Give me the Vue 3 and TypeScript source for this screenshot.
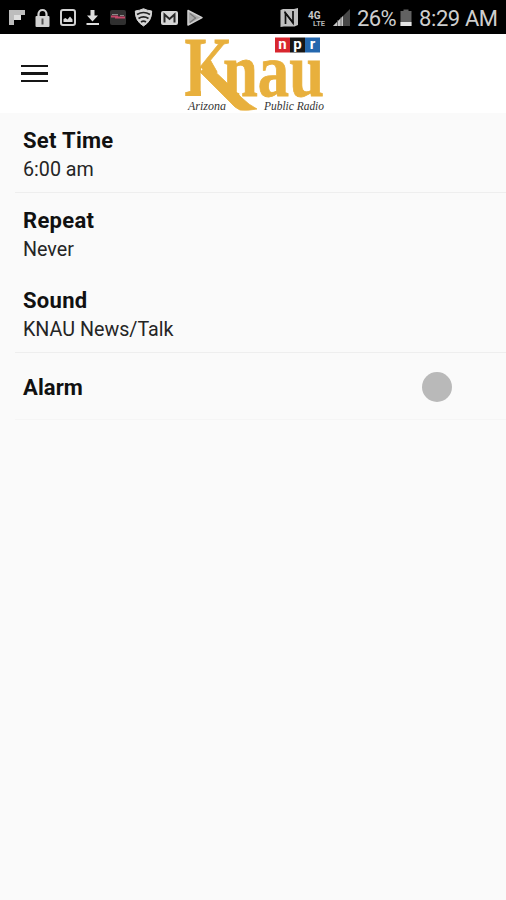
<script setup lang="ts">
import { ref } from 'vue'

interface Setting {
  label: string
  value: string
  divider: boolean
}

const settings: Setting[] = [
  { label: 'Set Time', value: '6:00 am', divider: true },
  { label: 'Repeat', value: 'Never', divider: false },
  { label: 'Sound', value: 'KNAU News/Talk', divider: true },
]

const alarmOn = ref(false)
</script>

<template>
  <div class="screen">
    <div class="status">
      <svg class="icons" width="210" height="34" viewBox="0 0 210 34">
        <path d="M9 10h16v5H14v10H9z" fill="#bdbdbd" />
        <path d="M14 15h7v5h-7z" fill="#dedede" />
        <path d="M38.500 17v-3a4 4 0 0 1 8 0v3" fill="none" stroke="#d2d2d2" stroke-width="2.200" />
        <rect x="35.500" y="16" width="14" height="11" rx="1" fill="#d2d2d2" />
        <path d="M42.500 18.500v6" stroke="#555" stroke-width="2" />
        <rect x="61" y="10" width="14" height="15" rx="2" fill="none" stroke="#d2d2d2" stroke-width="2" />
        <path d="M63.500 22v-3l2-1 2 1.500 2.500-3 2.500 3V22z" fill="#d8d8d8" />
        <path d="M90.500 10h4v5.500h3.500l-5.500 6-5.500-6h3.500zM86.500 23h12.500v2H86.500z" fill="#dedede" />
        <rect x="110" y="10" width="16" height="15" rx="2" fill="#303030" />
        <path d="M111 16.500h7M115 17.500h10" stroke="#c44769" stroke-width="2" />
        <path d="M112 14.500h6M120 15.500h4" stroke="#888" stroke-width="1" />
        <path d="M135.300 11q4.500-.5 8.200-2.300Q147 10.500 151.700 11q.3 10-8.200 15-8.500-5-8.200-15z" fill="#d6d6d6" stroke="#d6d6d6" stroke-linejoin="round" />
        <path d="M137 14.500q6.500-4 13 0M138.500 18.500q5-3.300 10 0M141 22q2.500-1.600 5 0" fill="none" stroke="#222" stroke-width="1.700" />
        <rect x="161" y="11" width="17" height="14" rx="2" fill="#d6d6d6" />
        <path d="M164.500 22.500v-8l5 4.500 5-4.500v8" fill="none" stroke="#292929" stroke-width="2" />
        <path d="M188 10.500v14.500l14-7.300z" fill="#a9a9a9" stroke="#d0d0d0" stroke-width="1.500" stroke-linejoin="round" />
        <path d="M190 13.500l6 5M190 22.500l6-5" stroke="#777" stroke-width="1.200" />
      </svg>
      <div class="right">
        <svg width="76" height="34" viewBox="278 0 76 34">
          <path d="M283 9h11l4-1v17l-3.500 1.500h-10.500l-3.500.5V10z" fill="#c0c0c0" />
          <path d="M285.500 24V13l7.500 10V11" fill="none" stroke="#111" stroke-width="1.700" />
          <path d="M284.500 12l9 11" stroke="#111" stroke-width="1.500" />
          <text x="308" y="19" font-size="10" font-weight="700" fill="#c9c9c9">4G</text>
          <text x="313" y="26" font-size="8" font-weight="700" fill="#b5b5b5" textLength="12" lengthAdjust="spacingAndGlyphs">LTE</text>
          <path d="M333 26l17-17v17z" fill="#484848" />
          <path d="M333 26l10-10v10z" fill="#c8c8c8" />
          <path d="M337.500 20v6M341 17v9" stroke="#555" stroke-width=".8" />
        </svg>
        <span class="percent">26%</span>
        <svg class="battery" width="12" height="34" viewBox="400 0 12 34">
          <path d="M400.500 11h3V9.500h5V11h3v15h-11z" fill="#626262" />
          <path d="M400.500 22h11v4h-11z" fill="#e6e6e6" />
        </svg>
        <span class="clock">8:29 AM</span>
      </div>
    </div>

    <header class="header">
      <button class="menu" aria-label="Menu"><i></i><i></i><i></i></button>
      <svg class="logo" width="150" height="79" viewBox="180 34 150 79">
        <defs>
          <clipPath id="k-upper">
            <path d="M180 34h56v26l-24 16-11-8v32h-21z" />
          </clipPath>
        </defs>
        <g class="wordmark">
          <text x="184.500" y="96" font-size="85" textLength="48" lengthAdjust="spacingAndGlyphs" clip-path="url(#k-upper)">K</text>
          <path d="M200 72l8-7 17 16q12 12 17 17 7 7 15 11-10 2-17 1-5-2-10-8z" />
          <text x="223" y="96" font-size="77" textLength="101" lengthAdjust="spacingAndGlyphs">nau</text>
        </g>
        <path d="M275 37.500h15v15h-15z" fill="#d8262e" />
        <path d="M290 37.500h15v15h-15z" fill="#161616" />
        <path d="M305 37.500h15v15h-15z" fill="#2467ae" />
        <g class="npr">
          <text x="282.500" y="49">n</text>
          <text x="297.500" y="49">p</text>
          <text x="312.500" y="49">r</text>
        </g>
        <g class="tagline">
          <text x="188" y="109.500" textLength="38" lengthAdjust="spacingAndGlyphs">Arizona</text>
          <text x="264" y="109.500" textLength="60" lengthAdjust="spacingAndGlyphs">Public Radio</text>
        </g>
      </svg>
    </header>

    <main>
      <section v-for="item in settings" :key="item.label" class="row" :class="{ divided: item.divider }">
        <h2>{{ item.label }}</h2>
        <p>{{ item.value }}</p>
      </section>
      <section class="row alarm">
        <h2>Alarm</h2>
        <button class="toggle" role="switch" :aria-checked="alarmOn" aria-label="Alarm" @click="alarmOn = !alarmOn">
          <span class="knob" :class="{ on: alarmOn }"></span>
        </button>
      </section>
    </main>
  </div>
</template>

<style>
body {
  margin: 0;
  background: #fafafa;
}
</style>

<style scoped>
.screen {
  width: 506px;
  height: 900px;
  overflow: hidden;
  background: #fafafa;
  font-family: Roboto, sans-serif;
  color: #111;
}
.status {
  height: 34px;
  background: #000;
  display: flex;
  justify-content: space-between;
}
.status svg {
  display: block;
  flex: none;
}
.right {
  display: flex;
  width: 228px;
  color: #cecece;
  font-size: 22px;
  line-height: 37px;
  white-space: nowrap;
}
.percent {
  width: 44px;
  padding-left: 3px;
  box-sizing: border-box;
  letter-spacing: -0.6px;
}
.battery {
  margin-left: 2px;
}
.clock {
  margin-left: 7px;
  letter-spacing: -0.4px;
}
.header {
  height: 79px;
  background: #fff;
  display: flex;
  align-items: flex-start;
}
.menu {
  margin: 31px 0 0 21px;
  padding: 0;
  width: 27px;
  border: 0;
  background: none;
  display: flex;
  flex-direction: column;
  gap: 5px;
}
.menu i {
  height: 2.400px;
  background: #161616;
}
.logo {
  margin-left: 132px;
  display: block;
  overflow: visible;
}
.wordmark {
  fill: #e8b03d;
  stroke: #e8b03d;
  stroke-width: 0.8px;
  font-family: "Liberation Serif", serif;
  font-weight: 700;
}
.npr {
  fill: #fff;
  font-size: 15px;
  font-weight: 700;
  text-anchor: middle;
}
.tagline {
  fill: #333;
  font-family: "Liberation Serif", serif;
  font-style: italic;
  font-size: 11.500px;
}
.row {
  height: 80px;
  box-sizing: border-box;
  margin-left: 15px;
  padding: 14px 0 0 8px;
  border-bottom: 1px solid transparent;
}
.divided {
  border-color: #eeeeee;
}
h2 {
  margin: 0;
  font-size: 22px;
  line-height: 28px;
  font-weight: 700;
  letter-spacing: 0.3px;
}
p {
  margin: 1px 0 0;
  font-size: 19.700px;
  line-height: 28px;
  font-weight: 400;
  color: #252525;
}
.alarm {
  height: 67px;
  padding: 2px 39px 0 8px;
  display: flex;
  align-items: center;
  justify-content: space-between;
  border-color: #f5f5f5;
}
.alarm h2 {
  padding-top: 1px;
  letter-spacing: 0.1px;
}
.toggle {
  width: 45px;
  height: 30px;
  padding: 0;
  border: 0;
  background: none;
}
.knob {
  display: block;
  width: 30px;
  height: 30px;
  border-radius: 50%;
  background: #b9b9b9;
}
.knob.on {
  margin-left: 15px;
}
</style>
